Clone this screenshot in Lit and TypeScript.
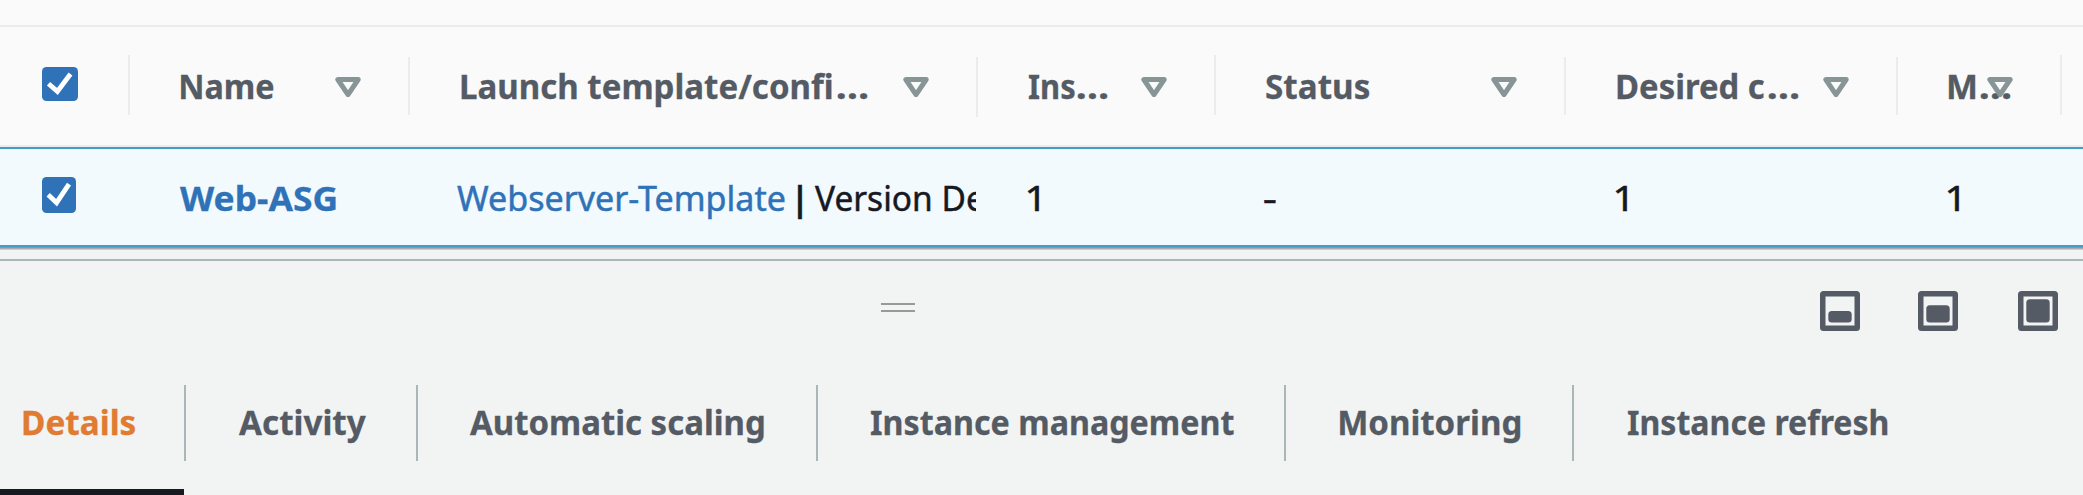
import { LitElement, html, css, svg } from "lit";
import { customElement, property } from "lit/decorators.js";

const FAMILY = '"Noto Sans", "Open Sans", sans-serif';
const SIZE = 34.6;
const ctx = document.createElement("canvas").getContext("2d")!;

/** A single-line label condensed so that its glyphs span exactly `ink` pixels. */
@customElement("fit-text")
class FitText extends LitElement {
  @property() text = "";
  @property({ type: Number }) ink = 0;
  @property({ type: Boolean }) bold = false;

  static styles = css`
    :host { display: block; flex: none; white-space: pre; line-height: 48px; }
    .t { display: inline-block; transform-origin: 0 50%; font-weight: 400; -webkit-text-stroke: 0.5px currentColor; }
    .bold { font-weight: 700; -webkit-text-stroke: 0.3px currentColor; }
  `;

  render() {
    ctx.font = `${this.bold ? 700 : 400} ${SIZE}px ${FAMILY}`;
    const m = ctx.measureText(this.text);
    const s = this.ink / (m.actualBoundingBoxRight + m.actualBoundingBoxLeft);
    const shift = m.actualBoundingBoxLeft * s;
    this.style.width = `${this.ink}px`;
    return html`<span class="t ${this.bold ? "bold" : ""}" style="transform: translateX(${shift}px) scaleX(${s})">${this.text}</span>`;
  }
}

const t = (text: string, ink: number, bold = false) =>
  html`<fit-text .text=${text} .ink=${ink} .bold=${bold}></fit-text>`;

interface Column {
  w: number; pad: number; label: string; ink: number; gap?: number; sep: [number, number];
}
const columns: Column[] = [
  { w: 280, pad: 51, label: "Name", ink: 93, sep: [30, 58] },
  { w: 568, pad: 51, label: "Launch template/confi", ink: 371, gap: 4.5, sep: [30, 60] },
  { w: 238, pad: 51, label: "Ins", ink: 45.5, gap: 2.5, sep: [28, 60] },
  { w: 350, pad: 50, label: "Status", ink: 103, sep: [30, 58] },
  { w: 332, pad: 51, label: "Desired c", ink: 147, gap: 4, sep: [30, 58] },
  { w: 164, pad: 51, label: "M", ink: 26.5, gap: 4, sep: [28, 60] },
];
const tabs = [
  { label: "Details", ink: 112, pad: 22.5, w: 186 },
  { label: "Activity", ink: 127, pad: 53, w: 232 },
  { label: "Automatic scaling", ink: 294, pad: 52, w: 400 },
  { label: "Instance management", ink: 362.5, pad: 52.5, w: 468 },
  { label: "Monitoring", ink: 180.5, pad: 54, w: 288 },
  { label: "Instance refresh", ink: 260, pad: 53.5, w: 509 },
];

@customElement("app-root")
class AppRoot extends LitElement {
  static styles = css`
    :host {
      display: flex; flex-direction: column; width: 2083px; height: 495px; overflow: hidden;
      background: #f2f3f3; font-family: "Noto Sans", "Open Sans", sans-serif; font-size: 34.6px;
      color: #16191f;
    }
    svg { display: block; flex: none; }
    .top { height: 25px; background: #fafafa; border-bottom: 2px solid #ebebeb; flex: none; }
    .head { display: flex; height: 118px; flex: none; background: #fafafa; border-bottom: 2px solid #eaeded; color: #545b64; }
    .th { display: flex; box-sizing: border-box; flex: none; }
    .label { display: flex; flex: 1; min-width: 0; padding-top: 35px; }
    .caret { margin: 50px 47px 0 0; z-index: 1; }
    .sep { width: 2px; background: #eaeded; flex: none; }
    .check { width: 128px; flex: none; padding-left: 42px; box-sizing: border-box; }
    .head .check { padding-top: 40px; }
    .row { display: flex; height: 96px; flex: none; background: #f3fafe; border-top: 2px solid #449dc8; border-bottom: 2px solid #449dc8; }
    .row .check { width: 130px; padding-top: 28px; }
    .td { display: flex; flex: none; box-sizing: border-box; overflow: hidden; padding-top: 25px; }
    .link { color: #2f72b8; }
    .shadow { height: 3px; flex: none; background: linear-gradient(#85898d, #a9adb0 50%, #dcdfdf); }
    .gap { height: 9px; flex: none; }
    .panel { border-top: 2px solid #aab7b8; flex: none; height: 126px; display: flex; box-sizing: border-box; }
    .grip { width: 34px; height: 5px; border-top: 2px solid #999; border-bottom: 2px solid #999; margin: 42px 905px 0 881px; flex: none; }
    .icons { display: flex; padding-top: 30px; }
    .tabs { display: flex; height: 110px; flex: none; color: #545b64; }
    .tab { display: flex; flex: none; box-sizing: border-box; height: 76px; border-right: 2px solid #aab7b8; padding-top: 13px; }
    .tab:last-child { border: 0; }
    .active { color: #e07b31; }
    .bar { width: 184px; height: 6px; margin-top: -6px; background: #16191f; flex: none; }
  `;

  private check(w: number, h: number, pts: string) {
    return html`<svg width=${w} height=${h} viewBox="0 0 ${w} ${h}">
      <rect width=${w} height=${h} rx="4.5" fill="#2f72b8"></rect>
      <polyline points=${pts} fill="none" stroke="#fff" stroke-width="4.8"></polyline>
    </svg>`;
  }

  private split(y: number, h: number) {
    return html`<svg width="40" height="40" viewBox="0 0 40 40">
      <rect x="2.75" y="2.75" width="34.5" height="34.5" rx="0.8" fill="none" stroke="#545b64" stroke-width="5.5" stroke-linejoin="round"></rect>
      ${svg`<rect x="8.3" y=${y} width="23.4" height=${h} rx="3.5" fill="#545b64"></rect>`}
    </svg>`;
  }

  render() {
    return html`
      <div class="top"></div>
      <div class="head">
        <div class="check">${this.check(36, 34, "6.5,16.7 15.4,24.4 28.5,7")}</div>
        <div class="sep" style="margin: 28px 0 30px"></div>
        ${columns.map((c) => html`
          <div class="th" style="width:${c.w}px;padding-left:${c.pad}px">
            <div class="label">
              ${t(c.label, c.ink, true)}
              ${c.gap ? html`<div style="width:${c.gap}px;flex:none"></div>${t("…", 30.6, true)}` : ""}
            </div>
            <svg class="caret" width="26" height="20" viewBox="0 0 26 20">
              <path d="M2.8 2.5H23.2L13 17.6Z" fill="none" stroke="#879596" stroke-width="5" stroke-linejoin="round"></path>
            </svg>
            <div class="sep" style="margin-top:${c.sep[0]}px;height:${c.sep[1]}px"></div>
          </div>`)}
      </div>
      <div class="row">
        <div class="check">${this.check(34, 36, "6.2,17.7 14.6,25.7 27,7.2")}</div>
        <div class="td link" style="width:280px;padding-left:49.5px">${t("Web-ASG", 156, true)}</div>
        <div class="td" style="width:566px;padding-left:46.5px">
          <span class="link">${t("Webserver-Template", 327.5)}</span>
          <div style="width:13.5px;flex:none"></div>${t("|", 4)}
          <div style="width:13.5px;flex:none"></div>${t("Version Default", 241)}
        </div>
        <div class="td" style="width:240px;padding-left:52px">${t("1", 11.5)}</div>
        <div class="td" style="width:350px;padding-left:48px">${t("-", 11.5)}</div>
        <div class="td" style="width:332px;padding-left:50px">${t("1", 11.5)}</div>
        <div class="td" style="width:164px;padding-left:50px">${t("1", 11.5)}</div>
      </div>
      <div class="shadow"></div>
      <div class="gap"></div>
      <div class="panel">
        <div class="grip"></div>
        <div class="icons">
          ${this.split(20, 11.5)}<div style="width:58px"></div>
          ${this.split(14.2, 17.3)}<div style="width:60px"></div>
          ${this.split(8.3, 23.2)}
        </div>
      </div>
      <div class="tabs">
        ${tabs.map((b, i) => html`
          <div class="tab ${i === 0 ? "active" : ""}" style="width:${b.w}px;padding-left:${b.pad}px">${t(b.label, b.ink, true)}</div>`)}
      </div>
      <div class="bar"></div>
    `;
  }
}
